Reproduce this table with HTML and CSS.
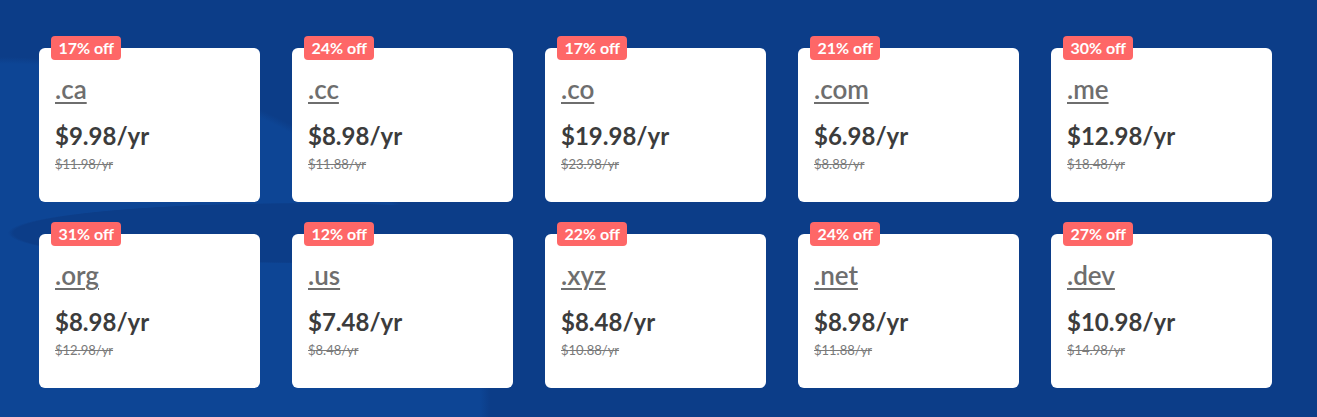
FILE: index.html
```html
<!DOCTYPE html>
<html lang="en">
<head>
<meta charset="utf-8">
<title>Domain deals</title>
<link rel="stylesheet" href="styles.css">
</head>
<body>
<section class="deals">
  <div class="grid">
    <div class="card"><span class="badge">17% off</span><a class="tld" href="#">.ca</a><div class="price">$9.98/yr</div><div class="old">$11.98/yr</div></div>
    <div class="card"><span class="badge">24% off</span><a class="tld" href="#">.cc</a><div class="price">$8.98/yr</div><div class="old">$11.88/yr</div></div>
    <div class="card"><span class="badge">17% off</span><a class="tld" href="#">.co</a><div class="price">$19.98/yr</div><div class="old">$23.98/yr</div></div>
    <div class="card"><span class="badge">21% off</span><a class="tld" href="#">.com</a><div class="price">$6.98/yr</div><div class="old">$8.88/yr</div></div>
    <div class="card"><span class="badge">30% off</span><a class="tld" href="#">.me</a><div class="price">$12.98/yr</div><div class="old">$18.48/yr</div></div>
    <div class="card"><span class="badge">31% off</span><a class="tld" href="#">.org</a><div class="price">$8.98/yr</div><div class="old">$12.98/yr</div></div>
    <div class="card"><span class="badge">12% off</span><a class="tld" href="#">.us</a><div class="price">$7.48/yr</div><div class="old">$8.48/yr</div></div>
    <div class="card"><span class="badge">22% off</span><a class="tld" href="#">.xyz</a><div class="price">$8.48/yr</div><div class="old">$10.88/yr</div></div>
    <div class="card"><span class="badge">24% off</span><a class="tld" href="#">.net</a><div class="price">$8.98/yr</div><div class="old">$11.88/yr</div></div>
    <div class="card"><span class="badge">27% off</span><a class="tld" href="#">.dev</a><div class="price">$10.98/yr</div><div class="old">$14.98/yr</div></div>
  </div>
</section>
</body>
</html>
```

FILE: styles.css
```css
* { box-sizing: border-box; }
html, body { margin: 0; padding: 0; }
body {
  font-family: Lato, "Noto Sans", sans-serif;
  width: 1317px;
  height: 417px;
  overflow: hidden;
}
.deals {
  height: 417px;
  padding: 48px 0 0 39px;
  background-color: #0c3d88;
  background-image:
    radial-gradient(ellipse 292px 30px at 300px 233px, #0c3d88 98%, rgba(12,61,136,0) 100%),
    radial-gradient(ellipse 490px 345px at 0 402px, #0d4595 98%, rgba(13,69,149,0) 100%);
}
.grid {
  display: grid;
  grid-template-columns: repeat(5, 221px);
  grid-auto-rows: 154px;
  gap: 32px;
}
.card {
  position: relative;
  background: #fff;
  border-radius: 6px;
  padding: 27px 16px 0;
  display: flex;
  flex-direction: column;
  align-items: flex-start;
}
.badge {
  position: absolute;
  left: 12px;
  top: -12px;
  height: 24px;
  line-height: 24px;
  padding: 0 7.5px;
  background: #fe6767;
  color: #fff;
  font-weight: 700;
  font-size: 16px;
  border-radius: 4px;
}
.tld {
  font-size: 26px;
  line-height: 28px;
  color: #6e6e6e;
  text-decoration: underline;
  text-underline-offset: 3px;
  text-decoration-thickness: 2px;
  font-weight: 600;
}
.price {
  margin-top: 19px;
  font-size: 24px;
  line-height: 28px;
  font-weight: 700;
  color: #3c3c3c;
}
.old {
  margin-top: 6px;
  font-size: 13px;
  line-height: 16px;
  color: #7a7a7a;
  text-decoration: line-through;
}
```
